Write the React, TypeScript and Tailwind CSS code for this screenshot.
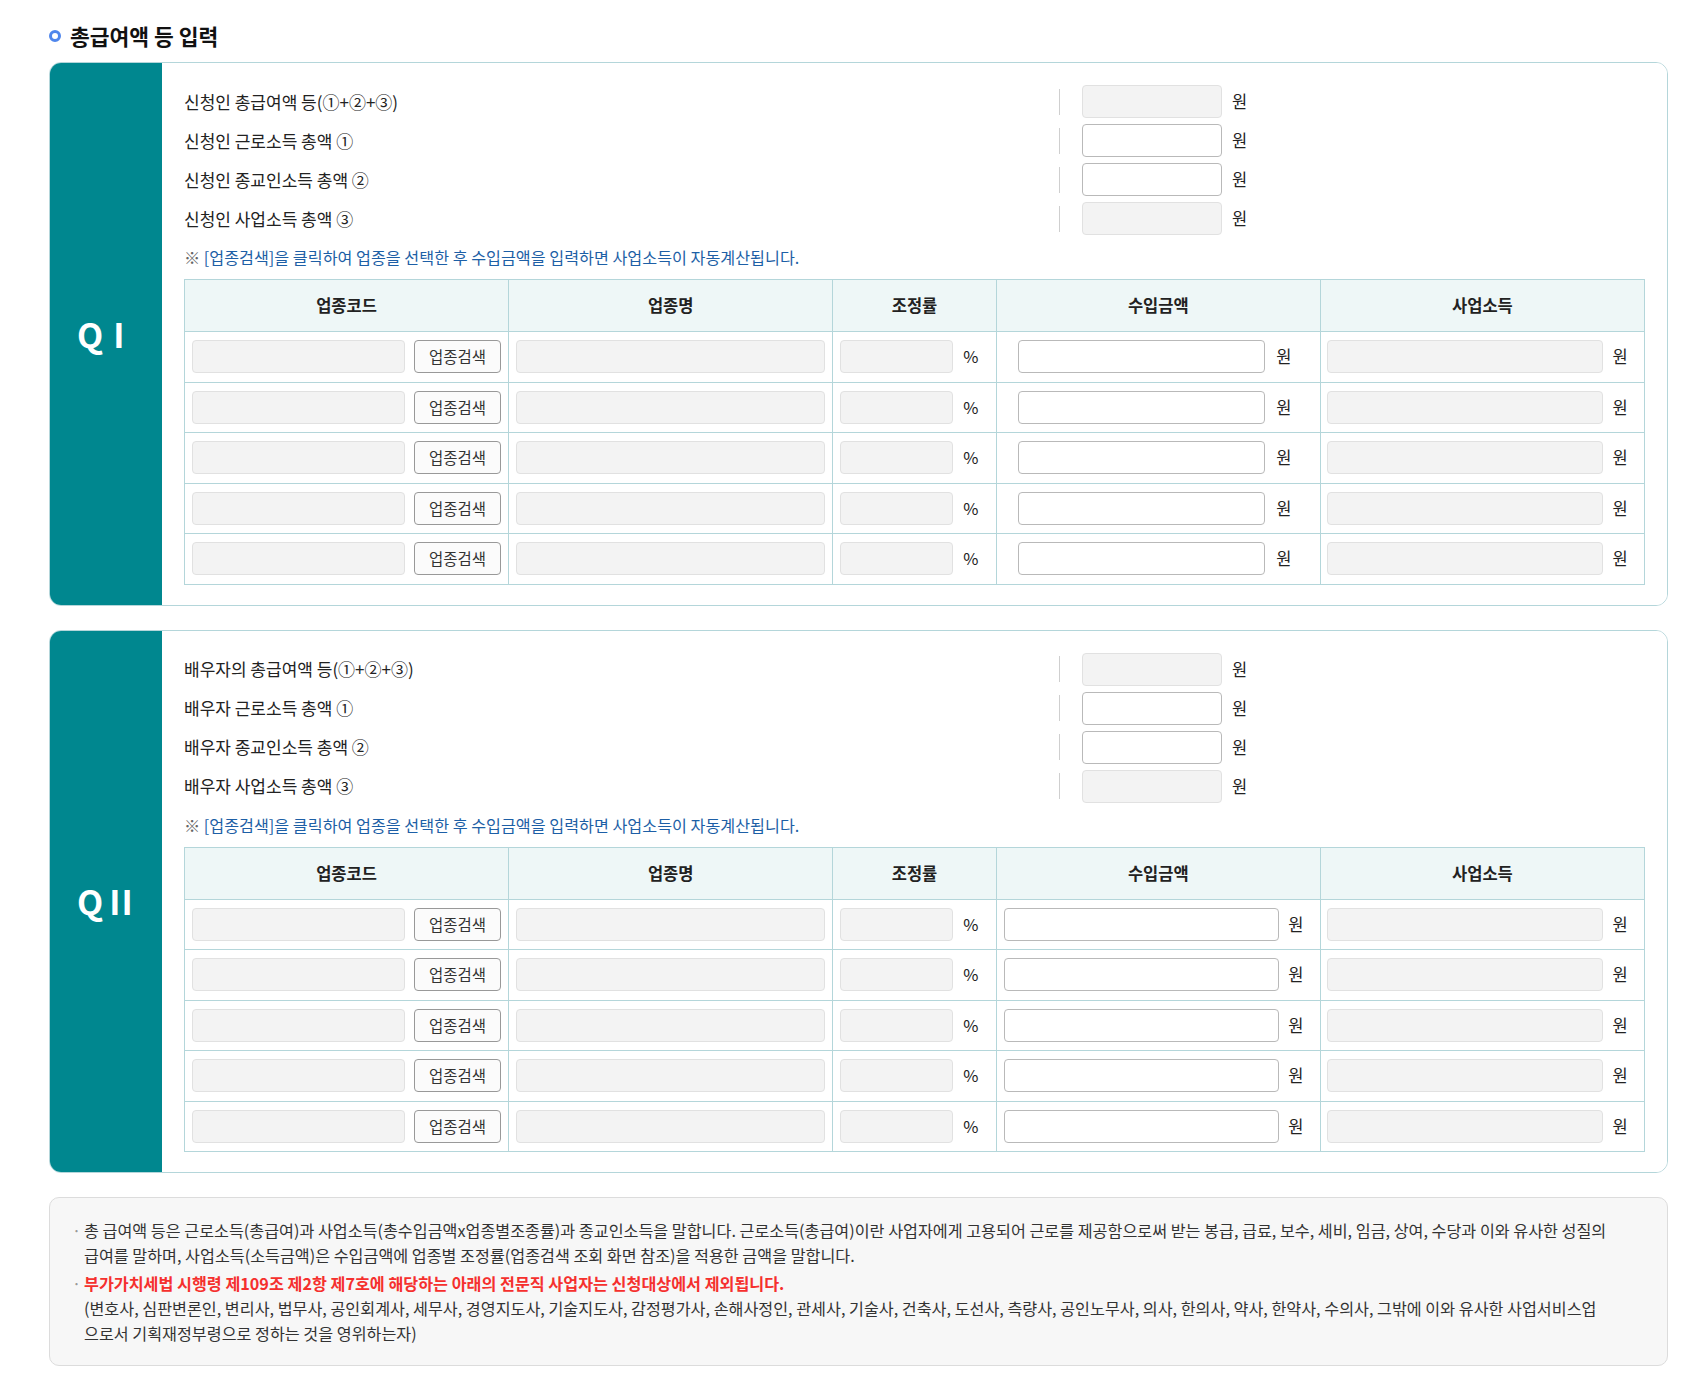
import React from "react";

const FONT = { fontFamily: '"Noto Sans CJK KR", "Noto Sans", sans-serif' };

type Side = "applicant" | "spouse";

const SUMMARY: Record<Side, { label: string; editable: boolean }[]> = {
  applicant: [
    { label: "신청인 총급여액 등(①+②+③)", editable: false },
    { label: "신청인 근로소득 총액 ①", editable: true },
    { label: "신청인 종교인소득 총액 ②", editable: true },
    { label: "신청인 사업소득 총액 ③", editable: false },
  ],
  spouse: [
    { label: "배우자의 총급여액 등(①+②+③)", editable: false },
    { label: "배우자 근로소득 총액 ①", editable: true },
    { label: "배우자 종교인소득 총액 ②", editable: true },
    { label: "배우자 사업소득 총액 ③", editable: false },
  ],
};

function Field({ editable, className = "" }: { editable?: boolean; className?: string }) {
  return (
    <div
      className={
        "h-[33px] rounded-[4px] border " +
        (editable ? "bg-white border-[#b9b9b9] " : "bg-[#f3f3f3] border-[#e1e1e1] ") +
        className
      }
    />
  );
}

function SummaryRow({ label, editable }: { label: string; editable: boolean }) {
  return (
    <div className="flex items-center h-[33px] mb-[6px]">
      <div className="w-[875px] text-[17px] text-[#222]">{label}</div>
      <div className="w-px h-[26px] bg-[#cfcfcf]" />
      <Field editable={editable} className="ml-[22px] w-[140px]" />
      <span className="ml-[10px] text-[16.5px] text-[#222]">원</span>
    </div>
  );
}

function BizRow({ wide }: { wide: boolean }) {
  return (
    <tr className="h-[50.5px]">
      <td className="border border-[#b4d6da] px-[7px]">
        <div className="flex items-center gap-[9px]">
          <Field className="flex-1" />
          <button className="w-[87px] h-[33px] rounded-[4px] border border-[#999] bg-[#fbfbfb] text-[15.5px] text-[#333]">
            업종검색
          </button>
        </div>
      </td>
      <td className="border border-[#b4d6da] px-[7px]">
        <Field />
      </td>
      <td className="border border-[#b4d6da] px-[7px]">
        <div className="flex items-center">
          <Field className="w-[113px]" />
          <span className="w-[36px] text-center text-[16.5px] text-[#222]">%</span>
        </div>
      </td>
      <td className="border border-[#b4d6da] px-[7px]">
        {wide ? (
          <div className="flex items-center">
            <Field editable className="w-[276px]" />
            <span className="w-[34px] text-center text-[16.5px] text-[#222]">원</span>
          </div>
        ) : (
          <div className="flex items-center pl-[14px]">
            <Field editable className="w-[247px]" />
            <span className="w-[38px] text-center text-[16.5px] text-[#222]">원</span>
          </div>
        )}
      </td>
      <td className="border border-[#b4d6da] pl-[6px] pr-[7px]">
        <div className="flex items-center">
          <Field className="flex-1" />
          <span className="w-[34px] text-center text-[16.5px] text-[#222]">원</span>
        </div>
      </td>
    </tr>
  );
}

function Panel({ numeral, side }: { numeral: string; side: Side }) {
  const heads = ["업종코드", "업종명", "조정률", "수입금액", "사업소득"];
  return (
    <div className="flex border border-[#b4d6da] rounded-[12px] overflow-hidden">
      <div className="w-[112px] bg-[#00878f] flex items-center pl-[27px]">
        <span className="text-white text-[34px] font-bold leading-none" style={FONT}>
          Q
          <span className={numeral === "I" ? "ml-[10px]" : "ml-[6px] tracking-[1px]"}>{numeral}</span>
        </span>
      </div>
      <div className="flex-1 bg-white px-[22px] pt-[22px] pb-[20px]">
        {SUMMARY[side].map((r) => (
          <SummaryRow key={r.label} label={r.label} editable={r.editable} />
        ))}
        <p className="mt-[11px] mb-[11px] h-[22px] leading-[22px] text-[16.2px] text-[#1d5fa6]">
          <span className="text-[#666]">※ </span>[업종검색]을 클릭하여 업종을 선택한 후 수입금액을 입력하면 사업소득이 자동계산됩니다.
        </p>
        <table className="w-full table-fixed border-collapse">
          <colgroup>
            <col className="w-[22.2%]" />
            <col className="w-[22.2%]" />
            <col className="w-[11.2%]" />
            <col className="w-[22.2%]" />
            <col className="w-[22.2%]" />
          </colgroup>
          <thead>
            <tr className="h-[52px] bg-[#eef7f7]">
              {heads.map((h) => (
                <th key={h} className="border border-[#b4d6da] text-[16.5px] font-bold text-[#222]">
                  {h}
                </th>
              ))}
            </tr>
          </thead>
          <tbody>
            {[0, 1, 2, 3, 4].map((i) => (
              <BizRow key={i} wide={side === "spouse"} />
            ))}
          </tbody>
        </table>
      </div>
    </div>
  );
}

export default function App() {
  return (
    <div className="min-h-[1379px] bg-white pl-[49px] pr-[18px] pt-[22px] pb-[14px]" style={FONT}>
      {/* section title */}
      <div className="flex items-center h-[28px] mb-[12px]">
        <span className="w-[12px] h-[12px] rounded-full border-[3px] border-[#4f86ec]" />
        <h2 className="ml-[9px] text-[21.5px] font-bold text-[#111]">총급여액 등 입력</h2>
      </div>

      <Panel numeral="I" side="applicant" />
      <div className="h-[24px]" />
      <Panel numeral="II" side="spouse" />

      {/* notice box */}
      <div className="mt-[24px] rounded-[10px] border border-[#dcdcdc] bg-[#f7f7f7] pl-[22px] pr-[12px] pt-[20px] pb-[19px] text-[16.2px] leading-[25px] text-[#333]">
        <div className="flex">
          <span className="w-[12px] text-[#999]">·</span>
          <p className="flex-1">
            총 급여액 등은 근로소득(총급여)과 사업소득(총수입금액x업종별조종률)과 종교인소득을 말합니다. 근로소득(총급여)이란 사업자에게 고용되어 근로를 제공함으로써 받는 봉급, 급료, 보수, 세비, 임금, 상여, 수당과 이와 유사한 성질의
            <br />
            급여를 말하며, 사업소득(소득금액)은 수입금액에 업종별 조정률(업종검색 조회 화면 참조)을 적용한 금액을 말합니다.
          </p>
        </div>
        <div className="flex mt-[3px]">
          <span className="w-[12px] text-[#999]">·</span>
          <div className="flex-1">
            <p className="font-bold text-[#f5302e]">
              부가가치세법 시행령 제109조 제2항 제7호에 해당하는 아래의 전문직 사업자는 신청대상에서 제외됩니다.
            </p>
            <p>
              (변호사, 심판변론인, 변리사, 법무사, 공인회계사, 세무사, 경영지도사, 기술지도사, 감정평가사, 손해사정인, 관세사, 기술사, 건축사, 도선사, 측량사, 공인노무사, 의사, 한의사, 약사, 한약사, 수의사, 그밖에 이와 유사한 사업서비스업
              <br />
              으로서 기획재정부령으로 정하는 것을 영위하는자)
            </p>
          </div>
        </div>
      </div>
    </div>
  );
}
